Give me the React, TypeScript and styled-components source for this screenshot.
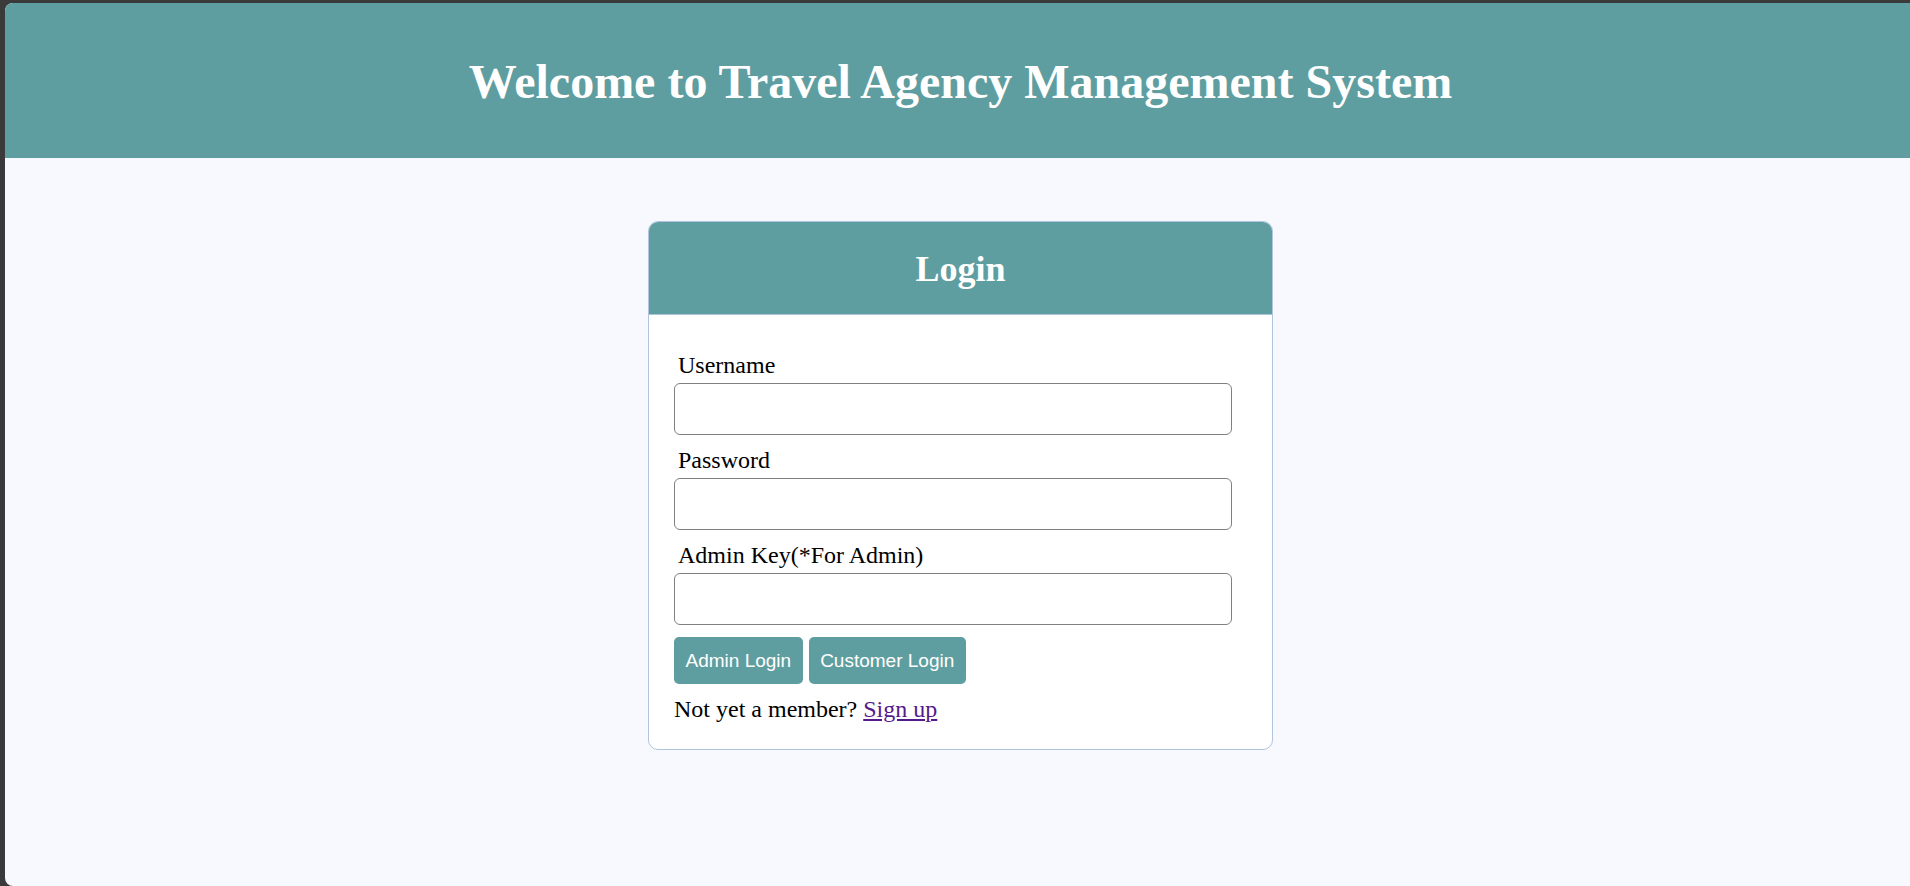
import React from "react";
import styled, { createGlobalStyle } from "styled-components";

const GlobalStyle = createGlobalStyle`
  html, body {
    margin: 0;
    padding: 0;
    height: 100%;
    background: #3a3a3a;
  }
  body {
    font-family: "Liberation Serif", "Times New Roman", serif;
    overflow: hidden;
  }
  #root {
    height: 100%;
  }
`;

const Window = styled.div`
  box-sizing: border-box;
  margin: 3px 0 0 5px;
  height: 883px;
  background: #f8f8ff;
  border-radius: 8px 0 0 8px;
  overflow: hidden;
  display: flex;
  flex-direction: column;
  align-items: center;
`;

const Header = styled.header`
  align-self: stretch;
  height: 155px;
  background: #5f9ea0;
  display: flex;
  align-items: center;
  justify-content: center;
  padding-left: 6px;
`;

const Title = styled.h1`
  margin: 0;
  font-size: 48px;
  font-weight: bold;
  color: #ffffff;
  line-height: 1;
  padding-top: 2px;
`;

const Card = styled.div`
  box-sizing: border-box;
  margin-top: 63px;
  width: 625px;
  background: #ffffff;
  border: 1px solid #b0c4de;
  border-radius: 10px;
  overflow: hidden;
  margin-left: 6px;
`;

const CardHeader = styled.div`
  height: 92px;
  background: #5f9ea0;
  border-bottom: 1px solid #b0c4de;
  display: flex;
  align-items: center;
  justify-content: center;
`;

const CardTitle = styled.h2`
  margin: 0;
  font-size: 36px;
  font-weight: bold;
  color: #ffffff;
  line-height: 1;
  padding-top: 2px;
`;

const Form = styled.form`
  padding: 37px 25px 26px 25px;
  display: flex;
  flex-direction: column;
`;

const Group = styled.div`
  display: flex;
  flex-direction: column;
  margin-bottom: 12px;
`;

const Label = styled.label`
  font-size: 24px;
  line-height: 27px;
  color: #000000;
  padding-left: 4px;
  margin-bottom: 4px;
`;

const Input = styled.input`
  box-sizing: border-box;
  width: 558px;
  height: 52px;
  border: 1px solid #808080;
  border-radius: 6px;
  background: #ffffff;
  font-size: 18px;
  padding: 0 10px;
  outline: none;
`;

const ButtonRow = styled.div`
  display: flex;
  gap: 6px;
`;

const Button = styled.button`
  height: 47px;
  padding: 0 11.5px;
  border: none;
  border-radius: 5px;
  background: #5f9ea0;
  color: #ffffff;
  font-family: "Liberation Sans", Arial, sans-serif;
  font-size: 19px;
  cursor: pointer;
`;

const Footer = styled.p`
  margin: 12px 0 0 0;
  font-size: 24px;
  line-height: 27px;
  color: #000000;
`;

const SignUp = styled.a`
  color: #551a8b;
  text-decoration: underline;
`;

const fields = [
  { id: "username", label: "Username", type: "text" },
  { id: "password", label: "Password", type: "password" },
  { id: "adminkey", label: "Admin Key(*For Admin)", type: "password" },
];

export default function App() {
  return (
    <>
      <GlobalStyle />
      <Window>
        <Header>
          <Title>Welcome to Travel Agency Management System</Title>
        </Header>
        <Card>
          <CardHeader>
            <CardTitle>Login</CardTitle>
          </CardHeader>
          <Form onSubmit={(e) => e.preventDefault()}>
            {fields.map((f) => (
              <Group key={f.id}>
                <Label htmlFor={f.id}>{f.label}</Label>
                <Input id={f.id} type={f.type} />
              </Group>
            ))}
            <ButtonRow>
              <Button type="button">Admin Login</Button>
              <Button type="button">Customer Login</Button>
            </ButtonRow>
            <Footer>
              Not yet a member? <SignUp href="#">Sign up</SignUp>
            </Footer>
          </Form>
        </Card>
      </Window>
    </>
  );
}
